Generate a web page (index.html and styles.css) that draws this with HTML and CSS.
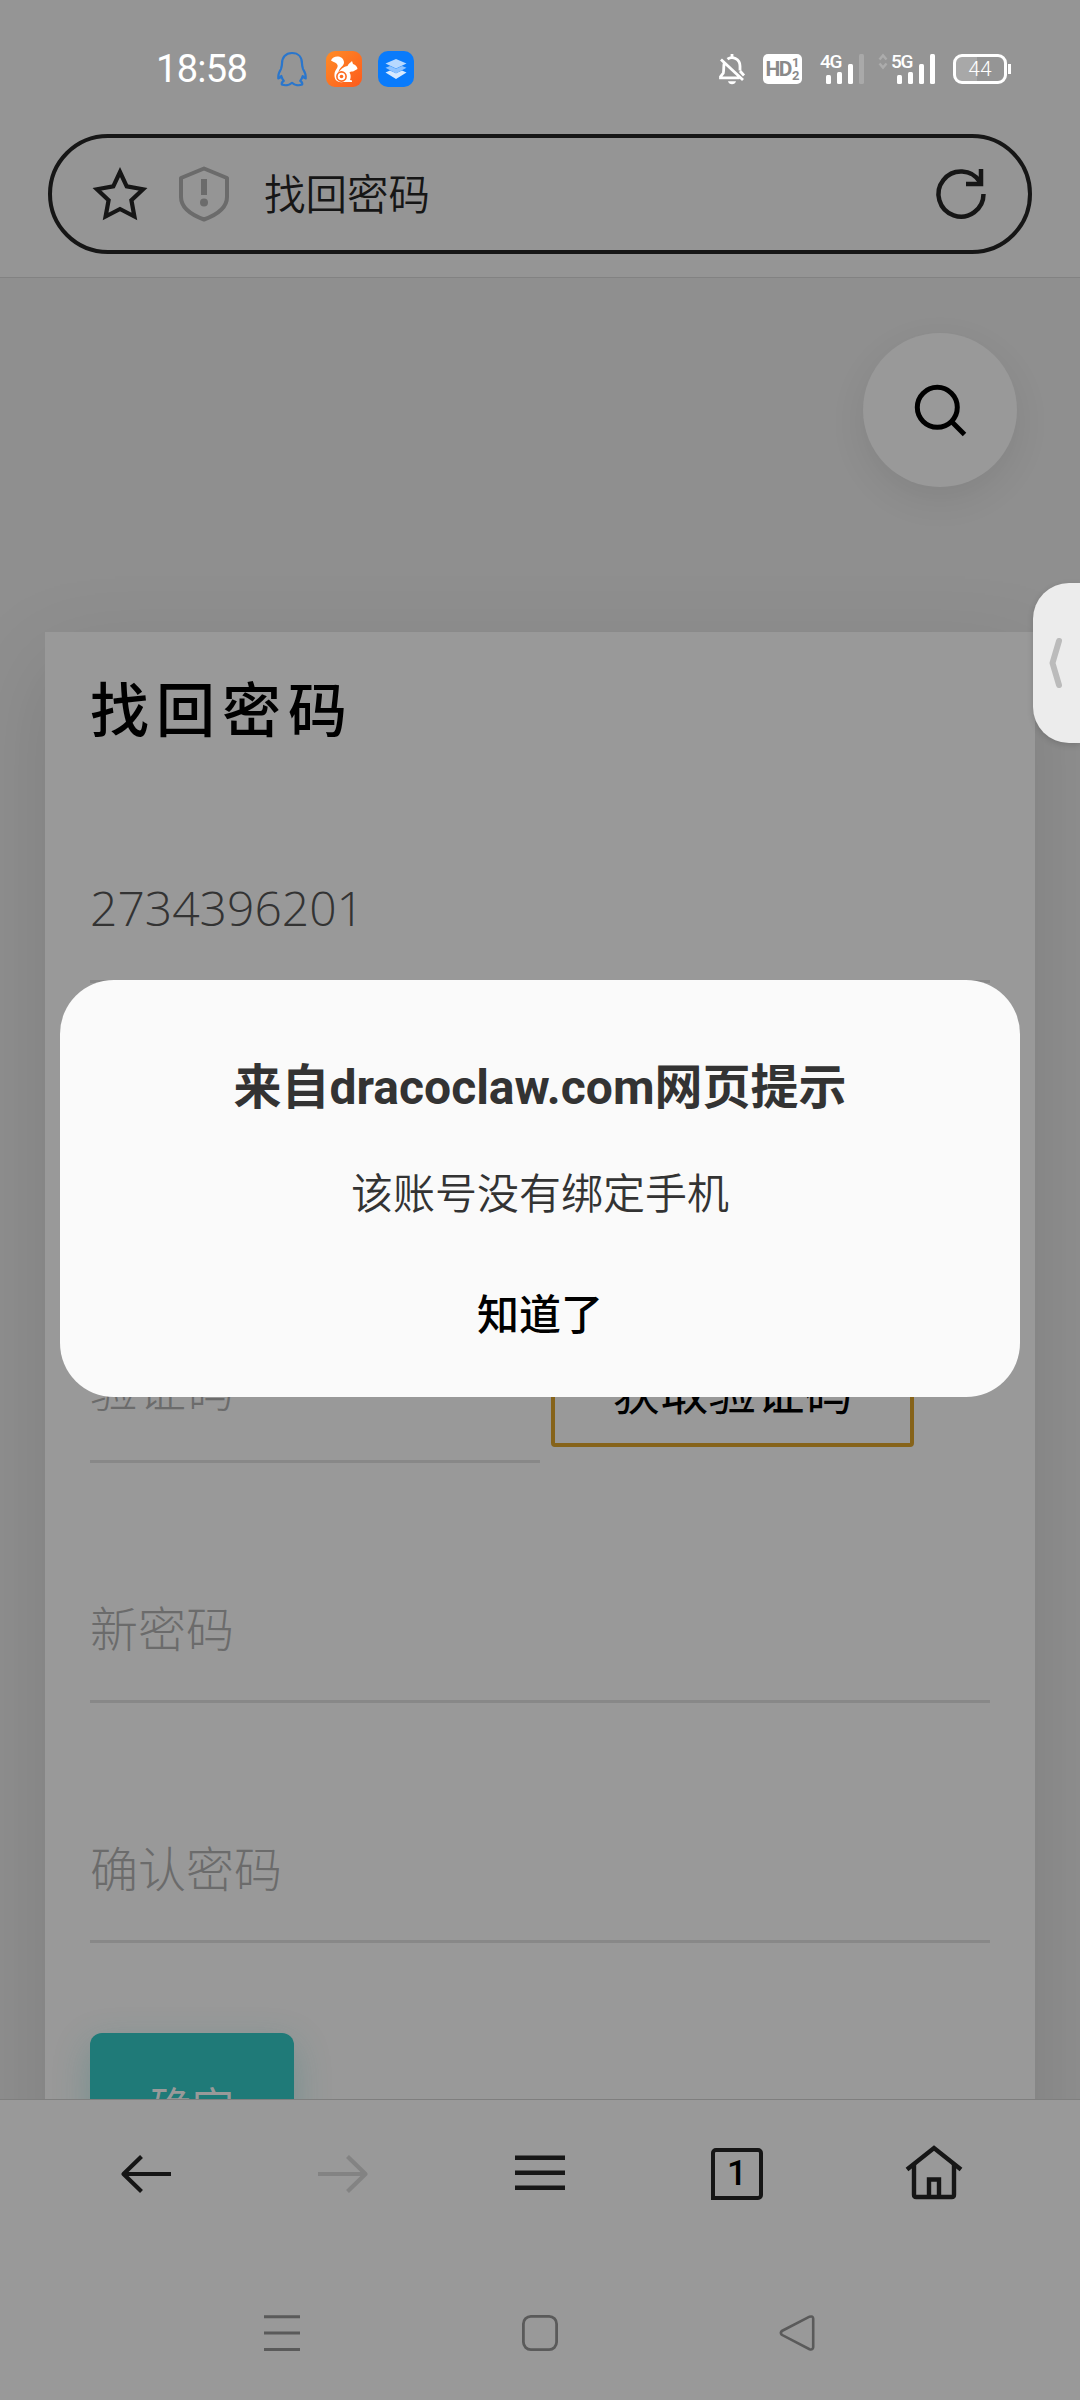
FILE: index.html
```html
<!DOCTYPE html>
<html lang="zh-CN">
<head>
<meta charset="utf-8">
<title>找回密码</title>
<link rel="stylesheet" href="styles.css">
</head>
<body>
<div class="screen">
  <header class="top">
    <div class="status">
      <span class="clock">18:58</span>
      <svg class="qq" width="30" height="36" viewBox="0 0 30 36" fill="none" stroke="#2a76cc" stroke-width="2.2" stroke-linejoin="round"><path d="M15 2C8.500 2 5 6.500 5 12.500c0 2-.5 3.500-1 5.500C2 21 1 23.500 1.300 27.500c1.200-.3 2.300-1.300 3-2.500.5 2 1.200 3.500 2.500 5-1.800.7-2.300 1.700-2 3.500 3 1.200 7.500.8 10.200-1.700 2.700 2.500 7.200 2.900 10.200 1.700.3-1.800-.2-2.800-2-3.500 1.300-1.500 2-3 2.500-5 .7 1.200 1.800 2.200 3 2.500.3-4-.7-6.500-2.700-9.500-.5-2-1-3.500-1-5.500C25 6.500 21.500 2 15 2z"/></svg>
      <svg class="uc" width="36" height="36" viewBox="0 0 36 36"><defs><linearGradient id="uc" x1="0" y1="0" x2="1" y2="1"><stop offset="0" stop-color="#ff8c26"/><stop offset="1" stop-color="#fd5a1c"/></linearGradient></defs><rect width="36" height="36" rx="9" fill="url(#uc)"/><path d="M5 9.500C7 4 17 4 18 11c.4 4-5.500 6-5.500 10.500 3-4.500 6.500-6 9-6.500 1-3 3.500-3.500 4.500-5l1 3c2.500.5 4.500 3 4.500 5l-4.500 2.500c-2 0-3 0-3.500 1 1.500 2 1.500 5 .5 7.500l2 .5V31h-9C11 32 8 28.500 8.500 23c.3-4 4-6.500 3-9C10.500 11.500 8 11.500 5 9.500z" fill="#fff"/><circle cx="15.500" cy="25.500" r="4.600" fill="none" stroke="#fd6a20" stroke-width="1.600"/><circle cx="15.500" cy="25.500" r="1.800" fill="#fd6a20"/></svg>
      <svg class="layers" width="36" height="36" viewBox="0 0 36 36"><rect width="36" height="36" rx="10" fill="#0a7bfb"/><path d="M7.500 21.500 12 19.500l6 2.800 6-2.800 4.500 2L18 28z" fill="#d8eaff"/><path d="M7.500 16.700 12 15l6 2.800 6-2.800 4.500 1.700L18 22.500z" fill="#8fc3ff"/><path d="M18 8l10.500 4.500L18 17.500 7.500 12.500z" fill="#b8d9ff"/></svg>
      <span class="grow"></span>
      <svg class="bell" width="26" height="32" viewBox="0 0 26 32" fill="none" stroke="#fff" stroke-width="2.800"><path d="M8.500 6.200C13 2.600 21 5.500 21 13v4.500M5.200 10C4.500 13 5 17.500 4.300 20L1.500 23.700v1.100h19M2 6.500l22 20.500M21 18l4 4.500"/><path d="M13 1v3" /><path d="M9 28.200h8c-.5 2-2 3-4 3s-3.500-1-4-3z" fill="#fff" stroke="none"/></svg>
      <span class="hd"><b>HD</b><span class="hd-num"><i>1</i><i>2</i></span></span>
      <span class="signal sim1"><span class="gen">4G</span><svg width="40" height="30" viewBox="0 0 40 30" fill="#fff"><rect x="6" y="21" width="5" height="9" rx="1.500"/><rect x="17" y="18" width="5" height="12" rx="1.500"/><rect x="28" y="10" width="5" height="20" rx="1.500"/><rect x="39" y="0" width="5" height="30" rx="1.500" fill="#a9a9a9"/></svg></span>
      <svg class="updown" width="8" height="15" viewBox="0 0 8 15" fill="none" stroke="#acacac" stroke-width="2.500"><path d="M.5 5.500 4 1.500l3.500 4M.5 9.500 4 13.500l3.500-4"/></svg>
      <span class="signal sim2"><span class="gen">5G</span><svg width="40" height="30" viewBox="0 0 40 30" fill="#fff"><rect x="6" y="21" width="5" height="9" rx="1.500"/><rect x="17" y="18" width="5" height="12" rx="1.500"/><rect x="28" y="10" width="5" height="20" rx="1.500"/><rect x="39" y="0" width="5" height="30" rx="1.500"/></svg></span>
      <span class="battery">44</span><span class="nub"></span>
    </div>
    <div class="address">
      <svg class="star" width="56" height="54" viewBox="0 0 56 54" fill="none" stroke="#161616" stroke-width="4.200"><path d="M28 5 34.700 19.300 51 22.300 39.400 33.200 42.400 49.500 28 42 13.600 49.500 16.600 33.200 5 22.300 21.300 19.300z"/></svg>
      <svg class="shield" width="50" height="56" viewBox="0 0 50 56"><path d="M25 2.500 48 12v19c0 9-8 17-23 22.500C10 48 2 40 2 31V12z" fill="none" stroke="#6b6b6b" stroke-width="4" stroke-linejoin="round"/><path d="M22 13h6v16h-6z" fill="#6b6b6b"/><circle cx="25" cy="36.500" r="4" fill="#6b6b6b"/></svg>
      <span class="address-text">找回密码</span>
      <svg width="50" height="50" viewBox="0 0 50 50" fill="none" stroke="#161616" stroke-width="4.500"><path d="M47.500 25A22.500 22.500 0 1 1 44 13"/><path d="M45 0v15H30"/></svg>
    </div>
  </header>

  <main class="page">
    <button class="search"><svg width="52" height="52" viewBox="0 0 52 52" fill="none" stroke="#000" stroke-width="5"><circle cx="23.300" cy="23.300" r="20"/><path d="M37 37l13.500 13.500"/></svg></button>
    <section class="card">
      <h1>找回密码</h1>
      <div class="field value">2734396201</div>
      <div class="field"></div>
      <div class="code-row">
        <div class="field">验证码</div>
        <button class="get-code">获取验证码</button>
      </div>
      <div class="field">新密码</div>
      <div class="field">确认密码</div>
      <button class="submit">确定</button>
    </section>
  </main>

  <nav class="toolbar">
    <svg width="60" height="60" viewBox="0 0 60 60" fill="none" stroke="#161616" stroke-width="4.200"><path d="M55 30H7M25.500 12.500 7.500 30l18 17.500" stroke-linejoin="round"/></svg>
    <svg width="60" height="60" viewBox="0 0 60 60" fill="none" stroke="#838383" stroke-width="4.200"><path d="M5 30h48M34.500 12.500 52.500 30l-18 17.500" stroke-linejoin="round"/></svg>
    <svg width="60" height="60" viewBox="0 0 60 60" fill="none" stroke="#161616" stroke-width="4.400"><path d="M5 13.800h50M5 28.800h50M5 43.800h50"/></svg>
    <span class="tab-slot"><span class="tabs">1</span></span>
    <svg width="60" height="60" viewBox="0 0 60 60" fill="none" stroke="#161616" stroke-width="4.400"><path d="M3 25.500 30 4l27 21.500"/><path d="M10 20v30.800q0 2.200 2.200 2.200h35.600q2.200 0 2.200-2.200V20M25 53V35.500h10V53"/></svg>
  </nav>
  <nav class="system">
    <svg width="40" height="40" viewBox="0 0 40 40" fill="none" stroke="#5a5a5a" stroke-width="3"><path d="M2 3.700h36M2 20h36M2 36.400h36"/></svg>
    <svg width="40" height="40" viewBox="0 0 40 40" fill="none" stroke="#5a5a5a" stroke-width="2.800"><rect x="3.400" y="3.400" width="33.200" height="33.200" rx="7.500"/></svg>
    <svg width="40" height="40" viewBox="0 0 40 40" fill="none" stroke="#5a5a5a" stroke-width="2.600"><path d="M3.800 18 31.500 3.700q3.500-1 3.700 2v28.500q-.2 3-3.700 2L3.800 21.800q-1.800-1.900 0-3.800z"/></svg>
  </nav>

  <div class="edge-handle"><svg width="14" height="52" viewBox="0 0 14 52" fill="none" stroke="#bbb" stroke-width="6" stroke-linecap="round" stroke-linejoin="round"><path d="M10 4 3.500 26 10 48"/></svg></div>

  <div class="dialog" role="dialog">
    <h2>来自dracoclaw.com网页提示</h2>
    <p>该账号没有绑定手机</p>
    <button>知道了</button>
  </div>
</div>
</body>
</html>
```
FILE: styles.css
```css
* { box-sizing: border-box; }
body {
  margin: 0;
  font-family: Roboto, "Noto Sans CJK SC", sans-serif;
}
h1, h2, p { margin: 0; }
button { border: 0; padding: 0; background: none; font-family: inherit; }
svg { display: block; flex: none; overflow: visible; }

.screen {
  position: relative;
  display: flex;
  flex-direction: column;
  width: 1080px;
  height: 2400px;
  overflow: hidden;
  background: #999;
}

.top { height: 278px; background: #959595; border-bottom: 1px solid #828282; }
.status {
  display: flex;
  align-items: center;
  height: 134px;
  padding: 4px 69px 0 156px;
  color: #fff;
}
.clock { width: 121px; font-size: 38px; line-height: 40px; letter-spacing: -.7px; }
.uc { margin-left: 19px; }
.layers { margin-left: 16px; }
.grow { flex: 1; }
.hd {
  display: flex;
  align-items: center;
  justify-content: center;
  width: 39px;
  height: 30px;
  margin-left: 18px;
  border-radius: 5px;
  background: #fff;
  color: #8a8a8a;
  font-size: 21px;
  line-height: 30px;
  letter-spacing: -1.500px;
}
.hd-num { display: flex; flex-direction: column; margin-left: 1px; font-size: 13px; line-height: 13px; font-weight: 700; letter-spacing: 0; }
.hd-num i { font-style: normal; }
.signal { position: relative; width: 40px; height: 30px; }
.sim1 { margin-left: 18px; }
.updown { margin: -15px 0 0 19px; }
.sim2 { margin-left: 4px; }
.gen { position: absolute; left: 0; top: -2px; font-size: 19px; line-height: 20px; font-weight: 500; letter-spacing: -1.200px; }
.battery {
  width: 54px;
  height: 30px;
  margin-left: 22px;
  border: 3px solid #fff;
  border-radius: 9px;
  background: linear-gradient(90deg, #a8a8a8 44%, transparent 44%);
  font-size: 21px;
  font-weight: 300;
  line-height: 25px;
  text-align: center;
}
.nub { width: 3px; height: 10px; margin-left: 1px; background: #fff; }

.address {
  display: flex;
  align-items: center;
  height: 120px;
  margin: 0 48px;
  padding: 0 42px 0 40px;
  border: 4px solid #161616;
  border-radius: 60px;
}
.star { margin-top: -1px; }
.shield { margin-left: 31px; }
.address-text { flex: 1; margin: -5px 0 0 35px; font: 350 41.500px/60px "Noto Sans CJK SC", sans-serif; color: #161616; }

.page { flex: none; height: 1821px; overflow: hidden; padding-top: 55px; background: #8f8f8f; }
.search {
  display: flex;
  align-items: center;
  justify-content: center;
  width: 154px;
  height: 154px;
  margin: 0 63px 145px auto;
  border-radius: 50%;
  background: #999;
  box-shadow: 0 12px 36px rgba(0, 0, 0, .08);
}
.card {
  height: 1600px;
  margin: 0 45px;
  padding: 45px 45px 0;
  background: #999;
  box-shadow: 0 30px 90px rgba(0, 0, 0, .12);
}
.card h1 {
  margin-bottom: 99px;
  font: 500 59px/60px "Noto Sans CJK SC", sans-serif;
  letter-spacing: 7px;
  color: #000;
}
.field {
  height: 147px;
  margin-bottom: 93px;
  border-bottom: 3px solid #888;
  font: 300 48px/141px "Noto Sans CJK SC", sans-serif;
  color: #6b6b6b;
}
.field.value { font-family: "Open Sans", sans-serif; line-height: 144px; color: #333; }
.code-row { display: flex; }
.code-row .field { width: 450px; }
.get-code {
  width: 363px;
  height: 115px;
  margin: 16px 0 0 11px;
  border: 4px solid #86631a;
  border-radius: 4px;
  font: 400 48px/105px "Noto Sans CJK SC", sans-serif;
  color: #000;
}
.submit {
  display: block;
  width: 204px;
  height: 144px;
  margin-top: -3px;
  border-radius: 12px;
  background: #1f7a78;
  box-shadow: 0 12px 36px rgba(31, 122, 120, .3);
  font: 400 42px/138px "Noto Sans CJK SC", sans-serif;
  color: #999;
}

.toolbar {
  display: flex;
  align-items: center;
  justify-content: space-between;
  height: 150px;
  padding: 0 116px 2px;
  border-top: 1px solid #7f7f7f;
}
.tab-slot { display: flex; width: 60px; height: 52px; padding-left: 4px; }
.tabs {
  width: 52px;
  height: 52px;
  border: 4.500px solid #161616;
  border-radius: 5px 5px 5px 0;
  font: 500 35px/43px Roboto, sans-serif;
  text-align: center;
}
.system {
  display: flex;
  justify-content: space-between;
  padding: 64px 262px 0;
}

.edge-handle {
  position: absolute;
  top: 583px;
  right: 0;
  display: flex;
  align-items: center;
  width: 47px;
  height: 160px;
  padding-left: 16px;
  border-radius: 36px 0 0 36px;
  background: #ececec;
  box-shadow: 0 2px 6px rgba(0, 0, 0, .15);
}

.dialog {
  position: absolute;
  top: 980px;
  left: 60px;
  width: 960px;
  height: 417px;
  padding-top: 78px;
  border-radius: 54px;
  background: #fafafa;
  text-align: center;
  color: #333;
}
.dialog h2 { font-size: 48px; line-height: 60px; font-weight: 700; }
.dialog p { margin-top: 47px; font-size: 42px; line-height: 60px; font-weight: 350; }
.dialog button {
  display: block;
  margin: 61px auto 0;
  font-size: 42px;
  line-height: 60px;
  font-weight: 500;
  color: #000;
}
```
